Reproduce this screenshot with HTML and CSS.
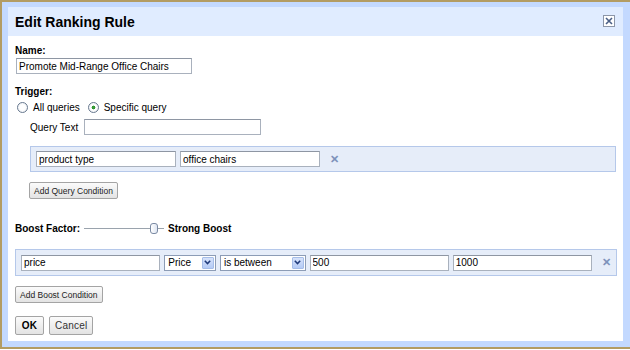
FILE: index.html
```html
<!DOCTYPE html>
<html lang="en">
<head>
    <meta charset="UTF-8">
    <title>Edit Ranking Rule</title>
    <link rel="stylesheet" href="styles.css">
</head>
<body>
<div class="frame">
    <div class="dialog">
        <div class="title-bar">
            <h1>Edit Ranking Rule</h1>
            <span class="close-btn">
                <svg width="8" height="8" viewBox="0 0 8 8"><path d="M1 1L7 7M7 1L1 7" stroke="#4a5f86" stroke-width="1.6"/></svg>
            </span>
        </div>
        <div class="content">
            <div class="label name-label">Name:</div>
            <input class="text-input name-input" type="text" value="Promote Mid-Range Office Chairs">

            <div class="label trigger-label">Trigger:</div>
            <div class="radio-row">
                <label class="radio"><input type="radio" name="trigger"> All queries</label>
                <label class="radio"><input type="radio" name="trigger" checked> Specific query</label>
            </div>
            <div class="query-row">
                <span>Query Text</span>
                <input class="text-input query-input" type="text">
            </div>

            <!-- Bedingungen fuer die Abfrage -->
            <div class="cond-box query-cond">
                <input class="text-input cond-input" type="text" value="product type">
                <input class="text-input cond-input" type="text" value="office chairs">
                <span class="remove">&#x2715;</span>
            </div>
            <button class="small-btn query-btn">Add Query Condition</button>

            <div class="boost-row">
                <span class="label">Boost Factor:</span>
                <div class="slider">
                    <div class="slider-line"></div>
                    <div class="slider-thumb"></div>
                </div>
                <span class="label">Strong Boost</span>
            </div>

            <!-- Boost-Bedingungen -->
            <div class="cond-box boost-cond">
                <input class="text-input cond-input" type="text" value="price">
                <div class="select price-select">Price<span class="arrow"><svg width="7" height="5" viewBox="0 0 7 5"><path d="M0.8 0.8L3.5 3.6L6.2 0.8" fill="none" stroke="#1f3a7a" stroke-width="1.5"/></svg></span></div>
                <div class="select op-select">is between<span class="arrow"><svg width="7" height="5" viewBox="0 0 7 5"><path d="M0.8 0.8L3.5 3.6L6.2 0.8" fill="none" stroke="#1f3a7a" stroke-width="1.5"/></svg></span></div>
                <input class="text-input cond-input" type="text" value="500">
                <input class="text-input cond-input" type="text" value="1000">
                <span class="remove">&#x2715;</span>
            </div>
            <button class="small-btn boost-btn">Add Boost Condition</button>

            <div class="actions">
                <button class="btn ok-btn">OK</button>
                <button class="btn">Cancel</button>
            </div>
        </div>
    </div>
</div>
</body>
</html>
```

FILE: styles.css
```css
/* Allgemeines Styling */
body {
    margin: 0;
    background-color: #fff;
    font-family: "Liberation Sans", Arial, sans-serif;
    font-size: 10px;
    color: #000;
}
.frame {
    width: 628px;
    height: 345px;
    border-top: 2px solid #b39c63;
    border-left: 2px solid #b39c63;
    border-bottom: 2px solid #b39c63;
}
.dialog {
    height: 334px;
    border-style: solid;
    border-color: #c3d9ff;
    border-width: 5px 7px 6px 6px;
    background-color: #fff;
}
.title-bar {
    height: 29px;
    background-color: #e0ecff;
    display: flex;
    align-items: flex-start;
    justify-content: space-between;
    padding: 0 8px 0 7px;
}
h1 {
    margin: 7px 0 0;
    font-size: 14px;
    line-height: 16px;
    font-weight: bold;
}
.close-btn {
    margin-top: 8px;
    width: 10px;
    height: 10px;
    border: 1px solid #8c96a8;
    background-color: #fff;
    display: flex;
    justify-content: center;
    align-items: center;
}
.content {
    padding: 0 7px;
}
.label {
    font-weight: bold;
    line-height: 12px;
}
.name-label {
    padding-top: 9px;
}
.text-input {
    box-sizing: border-box;
    height: 16px;
    margin: 0;
    padding: 0 2px;
    border: 1px solid #a9b1bd;
    border-top-color: #8e96a3;
    font-family: inherit;
    font-size: 10px;
    color: #000;
    background-color: #fff;
    outline: none;
}
.name-input {
    display: block;
    margin: 1px 0 0 1px;
    width: 176px;
}
.trigger-label {
    margin-top: 12px;
}
.radio-row {
    display: flex;
    gap: 6px;
    margin-top: 3px;
    height: 13px;
    align-items: center;
}
.radio {
    display: flex;
    align-items: center;
    gap: 5px;
    line-height: 13px;
}
.radio input {
    appearance: none;
    margin: 0 0 0 2px;
    width: 11px;
    height: 11px;
    border: 1px solid #68798f;
    border-radius: 50%;
    background: radial-gradient(circle, #fff 40%, #e4e8ee 100%);
    box-sizing: border-box;
}
.radio input:checked {
    background: radial-gradient(circle, #3aa43a 0, #2d8f2d 1.6px, #fff 2.2px, #fff 40%, #e4e8ee 100%);
}
.query-row {
    display: flex;
    align-items: center;
    gap: 6px;
    margin: 5px 0 0 15px;
}
.query-input {
    width: 177px;
}
.cond-box {
    box-sizing: border-box;
    height: 27px;
    display: flex;
    align-items: center;
    gap: 4px;
    padding: 0 5px;
    background-color: #e6edf9;
    border: 1px solid #b5c8ea;
}
.query-cond {
    margin: 11px 0 0 15px;
    width: 586px;
    height: 26px;
}
.cond-input {
    width: 140px;
}
.remove {
    margin-left: 6px;
    color: #7d92bb;
    font-size: 11px;
    font-weight: bold;
}
.small-btn {
    display: block;
    box-sizing: border-box;
    height: 17px;
    padding: 0 4px;
    white-space: nowrap;
    font-family: inherit;
    font-size: 8.5px;
    color: #222;
    background: linear-gradient(#fbfbfb, #e3e3e3);
    border: 1px solid #a4a4a4;
    border-radius: 2px;
}
.query-btn {
    margin: 10px 0 0 14px;
}
.boost-row {
    display: flex;
    align-items: center;
    margin-top: 23px;
    height: 13px;
}
.slider {
    position: relative;
    width: 80px;
    height: 11px;
    margin: 0 4px 0 4px;
}
.slider-line {
    position: absolute;
    left: 0;
    right: 0;
    top: 5px;
    height: 1px;
    background-color: #9aa3ad;
}
.slider-thumb {
    position: absolute;
    left: 66px;
    top: 0;
    box-sizing: border-box;
    width: 8px;
    height: 11px;
    border: 1px solid #7b8aa3;
    border-radius: 3px;
    background: linear-gradient(90deg, #fff, #dfe6f2);
}
.boost-cond {
    margin-top: 14px;
    width: 602px;
}
.select {
    box-sizing: border-box;
    height: 16px;
    display: flex;
    align-items: center;
    justify-content: space-between;
    padding: 0 1px 0 3px;
    border: 1px solid #8c9cb6;
    background-color: #fff;
    font-size: 10px;
}
.price-select {
    width: 52px;
}
.op-select {
    width: 86px;
}
.arrow {
    box-sizing: border-box;
    width: 12px;
    height: 12px;
    display: flex;
    justify-content: center;
    align-items: center;
    background: linear-gradient(#d6e2fb, #b5cbf6);
    border: 1px solid #a5bde8;
    border-radius: 1px;
}
.boost-btn {
    margin-top: 10px;
}
.actions {
    display: flex;
    gap: 5px;
    margin-top: 13px;
}
.btn {
    box-sizing: border-box;
    height: 19px;
    padding: 0 5px;
    font-family: inherit;
    font-size: 10px;
    letter-spacing: 0.2px;
    color: #333;
    background: linear-gradient(#fbfbfb, #e3e3e3);
    border: 1px solid #a4a4a4;
    border-radius: 2px;
}
.ok-btn {
    font-weight: bold;
    color: #000;
    width: 29px;
    padding: 0;
}
```
